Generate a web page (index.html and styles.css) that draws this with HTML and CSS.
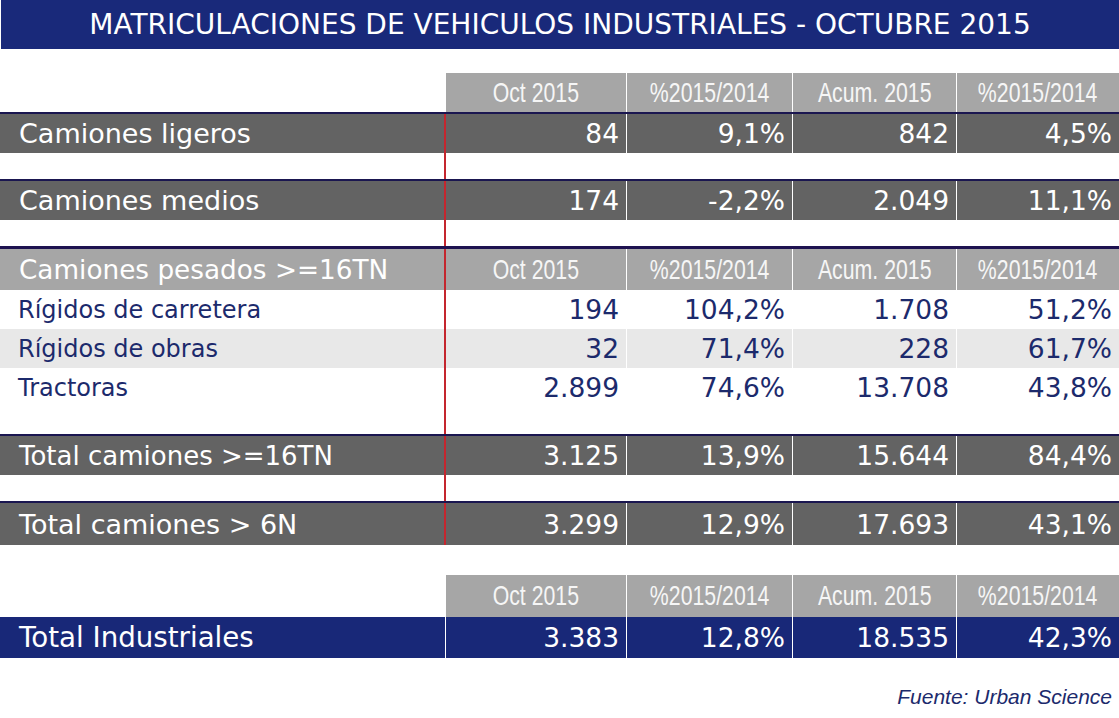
FILE: index.html
```html
<!DOCTYPE html>
<html lang="es">
<head>
<meta charset="utf-8">
<title>Matriculaciones de vehículos industriales - Octubre 2015</title>
<link rel="stylesheet" href="styles.css">
</head>
<body>
<div class="page">
  <h1 class="title">MATRICULACIONES DE VEHICULOS INDUSTRIALES - OCTUBRE 2015</h1>
  <div class="tbl">
    <div class="row head">
      <div class="lbl"></div>
      <div class="c"><span>Oct 2015</span></div>
      <div class="c"><span>%2015/2014</span></div>
      <div class="c"><span>Acum. 2015</span></div>
      <div class="c"><span>%2015/2014</span></div>
    </div>
    <div class="row band first">
      <div class="lbl red">Camiones ligeros</div>
      <div class="c">84</div><div class="c">9,1%</div><div class="c">842</div><div class="c">4,5%</div>
    </div>
    <div class="row gap"><div class="lbl red"></div></div>
    <div class="row band">
      <div class="lbl red">Camiones medios</div>
      <div class="c">174</div><div class="c">-2,2%</div><div class="c">2.049</div><div class="c">11,1%</div>
    </div>
    <div class="row gap"><div class="lbl red"></div></div>
    <div class="row subhead">
      <div class="lbl red">Camiones pesados &gt;=16TN</div>
      <div class="c"><span>Oct 2015</span></div>
      <div class="c"><span>%2015/2014</span></div>
      <div class="c"><span>Acum. 2015</span></div>
      <div class="c"><span>%2015/2014</span></div>
    </div>
    <div class="row data">
      <div class="lbl red">Rígidos de carretera</div>
      <div class="c">194</div><div class="c">104,2%</div><div class="c">1.708</div><div class="c">51,2%</div>
    </div>
    <div class="row data alt">
      <div class="lbl red">Rígidos de obras</div>
      <div class="c">32</div><div class="c">71,4%</div><div class="c">228</div><div class="c">61,7%</div>
    </div>
    <div class="row data">
      <div class="lbl red">Tractoras</div>
      <div class="c">2.899</div><div class="c">74,6%</div><div class="c">13.708</div><div class="c">43,8%</div>
    </div>
    <div class="row gap tall"><div class="lbl red"></div></div>
    <div class="row band heavy">
      <div class="lbl red">Total camiones &gt;=16TN</div>
      <div class="c">3.125</div><div class="c">13,9%</div><div class="c">15.644</div><div class="c">84,4%</div>
    </div>
    <div class="row gap"><div class="lbl red"></div></div>
    <div class="row band big">
      <div class="lbl red">Total camiones &gt; 6N</div>
      <div class="c">3.299</div><div class="c">12,9%</div><div class="c">17.693</div><div class="c">43,1%</div>
    </div>
    <div class="spacer"></div>
    <div class="row head head2">
      <div class="lbl"></div>
      <div class="c"><span>Oct 2015</span></div>
      <div class="c"><span>%2015/2014</span></div>
      <div class="c"><span>Acum. 2015</span></div>
      <div class="c"><span>%2015/2014</span></div>
    </div>
    <div class="row total">
      <div class="lbl">Total Industriales</div>
      <div class="c">3.383</div><div class="c">12,8%</div><div class="c">18.535</div><div class="c">42,3%</div>
    </div>
  </div>
  <p class="source">Fuente: Urban Science</p>
</div>
</body>
</html>
```

FILE: styles.css
```css
html, body {
  margin: 0;
  padding: 0;
  background: #ffffff;
}

.page {
  width: 1119px;
  font-family: "DejaVu Sans", Verdana, sans-serif;
}

.title {
  margin: 0 0 24px 1px;
  height: 49px;
  line-height: 49px;
  background: #19297a;
  color: #ffffff;
  font-size: 28px;
  font-weight: normal;
  text-align: center;
  letter-spacing: 0;
}

.tbl {
  display: flex;
  flex-direction: column;
}

.row {
  display: grid;
  grid-template-columns: 446px 180px 166px 164px 163px;
  height: 39px;
  box-sizing: border-box;
  font-size: 26.5px;
}

.row > div {
  box-sizing: border-box;
  display: flex;
  align-items: center;
  justify-content: flex-end;
  padding-right: 7px;
  white-space: nowrap;
}

.row > .lbl {
  justify-content: flex-start;
  padding-left: 19px;
  padding-right: 0;
  font-size: 27px;
}

.row > .red {
  border-right: 2px solid #c4262e;
}

.row > .c + .c {
  border-left: 1px solid #ffffff;
}

/* Column headers (condensed) */
.head .c,
.subhead .c {
  justify-content: center;
  padding-right: 0;
  background: #a6a6a6;
  color: #f6f6f6;
  font-family: "Liberation Sans", Arial, sans-serif;
  font-size: 28px;
}

.head .c span,
.subhead .c span {
  display: inline-block;
  transform: scaleX(0.76);
}

.head2 {
  height: 42px;
}

/* Dark grey band rows */
.band {
  height: 41px;
  border-top: 2px solid #1a1650;
  color: #ffffff;
}

.band > div {
  background: #636363;
}

.band.heavy > .lbl {
  font-size: 26px;
}

.band.big {
  height: 44px;
}

.gap {
  height: 26px;
}

.gap.tall {
  height: 27px;
}

.subhead {
  height: 44px;
  border-top: 3px solid #1e1250;
}

.subhead > div {
  background: #a6a6a6;
}

.subhead > .lbl {
  color: #ffffff;
  font-size: 26.3px;
}

.data {
  color: #1c2a6c;
}

.data > .lbl {
  font-size: 24px;
  padding-left: 18px;
}

.data.alt > div {
  background: #e8e8e8;
}

.spacer {
  height: 30px;
}

.total {
  height: 41px;
  color: #ffffff;
}

.total > div {
  background: #182878;
}

.total > .lbl {
  border-right: 1px solid #ffffff;
  font-size: 27.7px;
}

.source {
  margin: 27px 7px 0 0;
  text-align: right;
  font-family: "Liberation Sans", Arial, sans-serif;
  font-style: italic;
  font-size: 21px;
  line-height: 24px;
  color: #1c2a6c;
}
```
